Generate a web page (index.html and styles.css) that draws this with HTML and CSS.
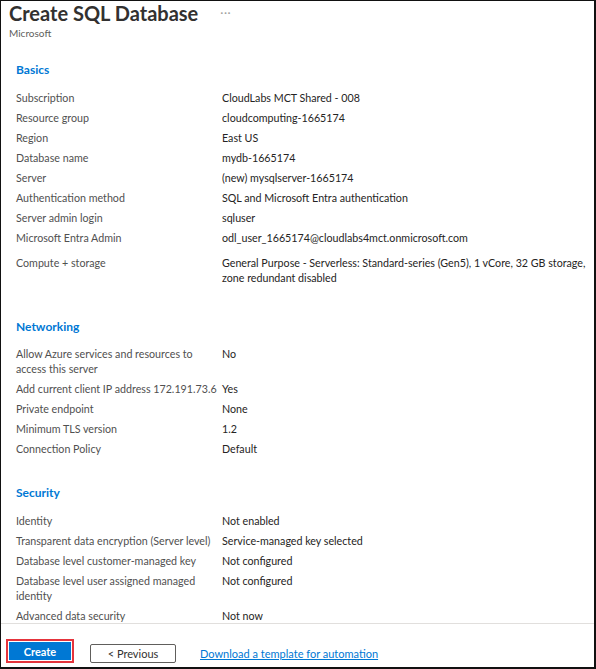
FILE: index.html
```html
<!DOCTYPE html>
<html lang="en">
<head>
<meta charset="utf-8">
<title>Create SQL Database</title>
<link rel="stylesheet" href="styles.css">
</head>
<body>
<div class="frame">
  <header class="top">
    <h1 class="title">Create SQL Database <span class="more">···</span></h1>
    <div class="publisher">Microsoft</div>
  </header>
  <main class="content">
    <section class="section">
      <h2 class="section-title">Basics</h2>
      <div class="row"><div class="label">Subscription</div><div class="value">CloudLabs MCT Shared - 008</div></div>
      <div class="row"><div class="label">Resource group</div><div class="value">cloudcomputing-1665174</div></div>
      <div class="row"><div class="label">Region</div><div class="value">East US</div></div>
      <div class="row"><div class="label">Database name</div><div class="value">mydb-1665174</div></div>
      <div class="row"><div class="label">Server</div><div class="value">(new) mysqlserver-1665174</div></div>
      <div class="row"><div class="label">Authentication method</div><div class="value">SQL and Microsoft Entra authentication</div></div>
      <div class="row"><div class="label">Server admin login</div><div class="value">sqluser</div></div>
      <div class="row"><div class="label">Microsoft Entra Admin</div><div class="value">odl_user_1665174@cloudlabs4mct.onmicrosoft.com</div></div>
      <div class="row spaced"><div class="label">Compute + storage</div><div class="value">General Purpose - Serverless: Standard-series (Gen5), 1 vCore, 32 GB storage,<br>zone redundant disabled</div></div>
    </section>
    <section class="section">
      <h2 class="section-title">Networking</h2>
      <div class="row"><div class="label">Allow Azure services and resources to<br>access this server</div><div class="value">No</div></div>
      <div class="row"><div class="label">Add current client IP address 172.191.73.6</div><div class="value">Yes</div></div>
      <div class="row"><div class="label">Private endpoint</div><div class="value">None</div></div>
      <div class="row"><div class="label">Minimum TLS version</div><div class="value">1.2</div></div>
      <div class="row"><div class="label">Connection Policy</div><div class="value">Default</div></div>
    </section>
    <section class="section">
      <h2 class="section-title">Security</h2>
      <div class="row"><div class="label">Identity</div><div class="value">Not enabled</div></div>
      <div class="row"><div class="label">Transparent data encryption (Server level)</div><div class="value">Service-managed key selected</div></div>
      <div class="row"><div class="label">Database level customer-managed key</div><div class="value">Not configured</div></div>
      <div class="row"><div class="label">Database level user assigned managed<br>identity</div><div class="value">Not configured</div></div>
      <div class="row"><div class="label">Advanced data security</div><div class="value">Not now</div></div>
    </section>
  </main>
  <footer class="footer">
    <button class="btn-primary" type="button">Create</button>
    <button class="btn-secondary" type="button">&lt; Previous</button>
    <a class="link" href="#">Download a template for automation</a>
  </footer>
</div>
</body>
</html>
```

FILE: styles.css
```css
* { box-sizing: border-box; }
html, body { margin: 0; padding: 0; background: #fff; }
body { font-family: Lato, "Liberation Sans", sans-serif; }

.frame {
  width: 596px;
  height: 669px;
  border: 1px solid #111;
  border-right-width: 2px;
  border-bottom-width: 2px;
  display: flex;
  flex-direction: column;
  overflow: hidden;
}

.top { padding-left: 8px; }
.title {
  margin: 0;
  font-size: 20px;
  font-weight: 700;
  line-height: 24px;
  color: #323130;
  display: flex;
  align-items: center;
  gap: 22px;
}
.more { font-size: 12px; color: #a19f9d; font-weight: 400; letter-spacing: 0.5px; }
.publisher { font-size: 10px; line-height: 14px; color: #605e5c; margin-top: 1px; }

.content { flex: 1; overflow: hidden; padding: 22px 0 0 15px; }
.section + .section { margin-top: 24px; }
.section-title {
  margin: 0 0 11.5px;
  font-size: 12px;
  font-weight: 700;
  line-height: 16px;
  color: #0078d4;
}
.row { display: flex; font-size: 10.7px; line-height: 15px; padding-bottom: 5px; }
.row.spaced { padding-top: 5px; padding-bottom: 10px; }
.label { width: 206px; flex: none; color: #505050; white-space: nowrap; }
.value { color: #252423; white-space: nowrap; }

.footer {
  height: 44px;
  flex: none;
  border-top: 1px solid #e1dfdd;
  display: flex;
  align-items: flex-start;
  padding-left: 8px;
}
.btn-primary {
  margin-top: 18px;
  width: 62px;
  height: 18px;
  padding: 0;
  border: none;
  background: #0078d4;
  color: #fff;
  font-family: inherit;
  font-size: 11px;
  font-weight: 700;
  outline: 2px solid #e5343c;
  outline-offset: 1px;
}
.btn-secondary {
  margin: 20px 0 0 19px;
  width: 86px;
  height: 19px;
  padding: 0;
  border: 1px solid #605e5c;
  border-radius: 2px;
  background: #fff;
  color: #323130;
  font-family: inherit;
  font-size: 11px;
}
.link {
  margin: 22px 0 0 24px;
  font-size: 11px;
  line-height: 15px;
  color: #0078d4;
  text-decoration: underline;
}
```
